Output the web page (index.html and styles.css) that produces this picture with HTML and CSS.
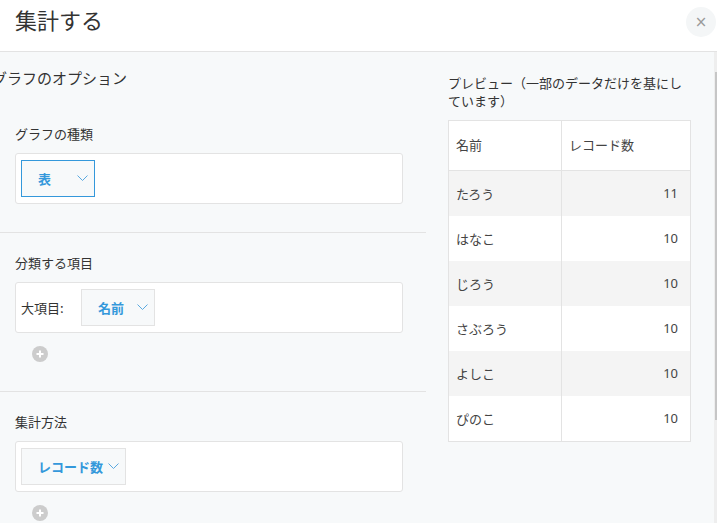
FILE: index.html
```html
<!DOCTYPE html>
<html lang="ja">
<head>
<meta charset="utf-8">
<title>集計する</title>
<link rel="stylesheet" href="styles.css">
</head>
<body>
<div class="dialog">
  <header class="dlg-header">
    <h1 class="dlg-title">集計する</h1>
    <button class="close-btn" type="button">×</button>
  </header>
  <div class="dlg-body">
    <div class="options">
      <h2 class="options-title">グラフのオプション</h2>
      <section class="opt-section first">
        <div class="opt-label">グラフの種類</div>
        <div class="opt-box">
          <div class="select active"><span>表</span><svg class="chev" width="11" height="7" viewBox="0 0 11 7"><polyline points="0.5,0.5 5.5,5.5 10.5,0.5" fill="none" stroke="#5aa9e0" stroke-width="1"/></svg></div>
        </div>
      </section>
      <section class="opt-section">
        <div class="opt-label">分類する項目</div>
        <div class="opt-box">
          <span class="field-label">大項目:</span>
          <div class="select"><span>名前</span><svg class="chev" width="11" height="7" viewBox="0 0 11 7"><polyline points="0.5,0.5 5.5,5.5 10.5,0.5" fill="none" stroke="#5aa9e0" stroke-width="1"/></svg></div>
        </div>
        <div class="add-btn"><svg width="16" height="16" viewBox="0 0 16 16"><circle cx="8" cy="8" r="8" fill="#cccccc"/><path d="M8 4.5v7M4.5 8h7" stroke="#fff" stroke-width="2"/></svg></div>
      </section>
      <section class="opt-section">
        <div class="opt-label">集計方法</div>
        <div class="opt-box">
          <div class="select"><span>レコード数</span><svg class="chev" width="11" height="7" viewBox="0 0 11 7"><polyline points="0.5,0.5 5.5,5.5 10.5,0.5" fill="none" stroke="#5aa9e0" stroke-width="1"/></svg></div>
        </div>
        <div class="add-btn"><svg width="16" height="16" viewBox="0 0 16 16"><circle cx="8" cy="8" r="8" fill="#cccccc"/><path d="M8 4.5v7M4.5 8h7" stroke="#fff" stroke-width="2"/></svg></div>
      </section>
    </div>
    <div class="preview">
      <p class="preview-title">プレビュー（一部のデータだけを基にしています）</p>
      <table class="preview-table">
        <thead>
          <tr><th>名前</th><th>レコード数</th></tr>
        </thead>
        <tbody>
          <tr><td>たろう</td><td class="num">11</td></tr>
          <tr><td>はなこ</td><td class="num">10</td></tr>
          <tr><td>じろう</td><td class="num">10</td></tr>
          <tr><td>さぶろう</td><td class="num">10</td></tr>
          <tr><td>よしこ</td><td class="num">10</td></tr>
          <tr><td>ぴのこ</td><td class="num">10</td></tr>
        </tbody>
      </table>
    </div>
  </div>
  <div class="scrollbar"><div class="thumb"></div></div>
</div>
</body>
</html>
```

FILE: styles.css
```css
* { box-sizing: border-box; }
html, body {
  margin: 0;
  padding: 0;
  height: 100%;
  overflow: hidden;
}
body {
  font-family: "Noto Sans CJK JP", "Noto Sans", sans-serif;
  color: #333;
  background: #f7f9fa;
}
.dialog {
  position: relative;
  width: 717px;
  height: 523px;
  overflow: hidden;
}
.dlg-header {
  height: 52px;
  background: #fff;
  border-bottom: 1px solid #e3e3e3;
  display: flex;
  justify-content: space-between;
  align-items: flex-start;
  padding: 0 1px 0 15px;
}
.dlg-title {
  margin: 0;
  font-size: 22px;
  font-weight: 400;
  line-height: 38px;
  color: #333;
}
.close-btn {
  margin-top: 7px;
  width: 30px;
  height: 30px;
  border: none;
  border-radius: 50%;
  background: #f4f6f7;
  color: #9a9a9a;
  font-family: "DejaVu Sans", sans-serif;
  font-size: 15px;
  line-height: 30px;
  padding: 0;
  text-align: center;
}
.dlg-body {
  display: flex;
  align-items: flex-start;
  gap: 22px;
}
.options {
  width: 426px;
  flex: none;
}
.options-title {
  margin: 0 0 0 -8px;
  padding-top: 16px;
  font-size: 15px;
  font-weight: 400;
  line-height: 20px;
  white-space: nowrap;
}
.opt-section {
  padding: 21px 23px 29px 15px;
  border-bottom: 1px solid #e3e3e3;
}
.opt-section.first {
  padding-top: 37px;
  padding-bottom: 28px;
}
.opt-section:last-child {
  border-bottom: none;
}
.opt-label {
  font-size: 13px;
  line-height: 18px;
  margin-bottom: 10px;
}
.opt-box {
  height: 51px;
  background: #fff;
  border: 1px solid #e3e3e3;
  border-radius: 3px;
  padding: 6px 5px;
  display: flex;
  align-items: center;
}
.field-label {
  font-size: 13px;
  width: 60px;
  color: #333;
}
.select {
  height: 37px;
  min-width: 74px;
  padding: 0 6px 0 16px;
  display: flex;
  align-items: center;
  justify-content: space-between;
  gap: 5px;
  background: #f7f9fa;
  border: 1px solid #e3e3e3;
  color: #3498db;
  font-size: 13px;
  font-weight: 700;
}
.select.active {
  border-color: #3498db;
}
.chev {
  display: block;
  flex: none;
}
.add-btn {
  margin: 13px 0 0 17px;
  width: 16px;
  height: 16px;
}
.add-btn svg { display: block; }
.preview {
  width: 243px;
  padding-top: 22px;
}
.preview-title {
  margin: 0 0 10px;
  font-size: 13px;
  line-height: 18px;
  color: #333;
}
.preview-table {
  width: 243px;
  border-collapse: separate;
  border-spacing: 0;
  border: 1px solid #e3e3e3;
  background: #fff;
  font-size: 13px;
  color: #444;
  table-layout: fixed;
}
.preview-table th {
  height: 50px;
  font-weight: 400;
  text-align: left;
  padding: 0 0 2px 7px;
  border-bottom: 1px solid #e3e3e3;
}
.preview-table th:first-child,
.preview-table td:first-child {
  width: 113px;
  border-right: 1px solid #e3e3e3;
}
.preview-table td {
  height: 45px;
  padding: 0 0 1px 7px;
}
.preview-table tbody tr:nth-child(odd) {
  background: #f4f4f4;
}
.preview-table td.num {
  text-align: right;
  padding: 0 12px 1px 0;
  font-family: "Noto Sans", sans-serif;
}
.scrollbar {
  position: absolute;
  top: 52px;
  right: 0;
  width: 3px;
  bottom: 0;
  background: #eeeeee;
}
.thumb {
  margin-top: 20px;
  margin-left: 1px;
  width: 2px;
  height: 348px;
  background: #c6c6c6;
}
```
